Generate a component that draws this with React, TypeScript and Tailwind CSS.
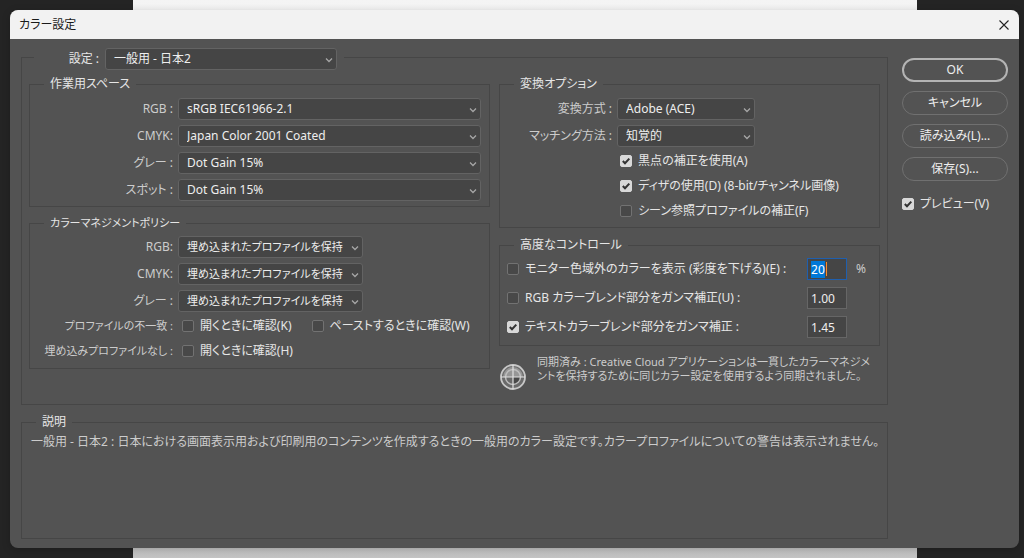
import { FC, ReactNode, useEffect, useRef } from 'react';

interface SelectFieldProps {
    id: string;
    value: string;
    className: string;
}

const SelectField: FC<SelectFieldProps> = ({ id, value, className }) => {
    return (
        <div className={`relative ${className}`}>
            <select
                id={id}
                defaultValue={value}
                className="block w-full h-[22px] appearance-none rounded-[3px] border border-[#636363] bg-[#454545] pl-2 pr-4 text-[#eeeeee] outline-none"
            >
                <option>{value}</option>
            </select>
            <svg className="pointer-events-none absolute right-1 top-2 h-2 w-2" viewBox="0 0 8 8" fill="none" stroke="#a6a6a6" strokeWidth="1.3">
                <path d="M1 2.5 4 5.5 7 2.5" />
            </svg>
        </div>
    );
};

interface LabeledSelectProps extends SelectFieldProps {
    label: string;
    labelClassName: string;
}

const LabeledSelect: FC<LabeledSelectProps> = ({ id, label, value, className, labelClassName }) => {
    return (
        <div className="flex items-center gap-[5px]">
            <label htmlFor={id} className={`shrink-0 text-right text-[#cccccc] ${labelClassName}`}>{label}</label>
            <SelectField id={id} value={value} className={className} />
        </div>
    );
};

interface CheckFieldProps {
    label: string;
    checked?: boolean;
}

const CheckField: FC<CheckFieldProps> = ({ label, checked }) => {
    return (
        <label className="flex items-center gap-[6px] whitespace-nowrap text-[#e6e6e6]">
            <span className="relative h-3 w-3 shrink-0">
                <input
                    type="checkbox"
                    defaultChecked={checked}
                    className="peer block h-3 w-3 appearance-none rounded-[2px] border border-[#727272] bg-[#484848] checked:border-[#d8d8d8] checked:bg-[#d8d8d8]"
                />
                <svg className="pointer-events-none absolute inset-0 hidden h-3 w-3 peer-checked:block" viewBox="0 0 12 12" fill="none" stroke="#333333" strokeWidth="2">
                    <path d="M2.8 6 5 8.3 9.3 3.6" />
                </svg>
            </span>
            {label}
        </label>
    );
};

interface GroupProps {
    title: string;
    titleClassName?: string;
    className?: string;
    children: ReactNode;
}

const Group: FC<GroupProps> = ({ title, titleClassName = '', className = '', children }) => {
    return (
        <fieldset className={`min-w-0 border border-[#464646] ${className}`}>
            <legend className={`ml-[14px] px-[6px] leading-4 text-[#e6e6e6] ${titleClassName}`}>{title}</legend>
            {children}
        </fieldset>
    );
};

const numberClass = 'block h-[22px] w-10 shrink-0 border bg-[#454545] pl-[3px] text-[#eeeeee] outline-none selection:bg-[#0078d7] selection:text-white';

const spaces = [
    { id: 'ws-rgb', label: 'RGB :', value: 'sRGB IEC61966-2.1' },
    { id: 'ws-cmyk', label: 'CMYK:', value: 'Japan Color 2001 Coated' },
    { id: 'ws-gray', label: 'グレー :', value: 'Dot Gain 15%' },
    { id: 'ws-spot', label: 'スポット :', value: 'Dot Gain 15%' },
];

const policies = [
    { id: 'po-rgb', label: 'RGB:' },
    { id: 'po-cmyk', label: 'CMYK:' },
    { id: 'po-gray', label: 'グレー :' },
];

const App: FC = () => {
    const saturation = useRef<HTMLInputElement>(null);

    useEffect(() => {
        saturation.current?.focus();
        saturation.current?.select();
    }, []);

    return (
        <div className="relative flex min-h-screen bg-[#242424] py-[10px] pl-[10px] pr-[5px] font-['Noto_Sans','Noto_Sans_CJK_JP',sans-serif] text-[12px] leading-4 [font-feature-settings:'palt']">
            <div className="absolute inset-y-0 left-[13%] right-[107px] bg-linear-to-b from-[#f4f4f4] to-[#c4c4c4]" />
            <div className="relative flex flex-1 flex-col overflow-hidden rounded-lg bg-[#535353] shadow-[0_2px_8px_rgba(0,0,0,0.2)]">
                <header className="flex h-[29px] shrink-0 items-center justify-between bg-[#f2f2f2] px-[9px] text-[#1a1a1a]">
                    <h1>カラー設定</h1>
                    <button aria-label="閉じる">
                        <svg className="h-3 w-3" viewBox="0 0 12 12" fill="none" stroke="#222222" strokeWidth="1.1">
                            <path d="M1.5 1.5 10.5 10.5M10.5 1.5 1.5 10.5" />
                        </svg>
                    </button>
                </header>

                <div className="flex flex-1 gap-[14px] px-[11px] pb-[9px] pt-[5px]">
                    <main className="flex min-w-0 flex-1 flex-col gap-[9px]">
                        <fieldset className="min-w-0 border border-[#464646] px-[7px] pb-[13px]">
                            <legend className="ml-[5px] flex items-center gap-[6px] pr-[7px] pt-1">
                                <label htmlFor="settings" className="w-[65px] text-right text-[#e6e6e6]">設定 :</label>
                                <SelectField id="settings" value="一般用 - 日本2" className="w-[232px]" />
                            </legend>
                            <div className="grid grid-cols-[23fr_19fr] gap-[9px] pt-[6px]">
                                <div className="flex flex-col gap-2">
                                    <Group title="作業用スペース" className="pb-[5px] pt-[6px]">
                                        <div className="flex flex-col gap-[5px] pr-2">
                                            {spaces.map((s) => (
                                                <LabeledSelect key={s.id} {...s} labelClassName="w-[143px]" className="flex-1" />
                                            ))}
                                        </div>
                                    </Group>
                                    <Group title="カラーマネジメントポリシー" titleClassName="text-[11px]" className="pb-[9px] pt-[5px] text-[11px]">
                                        <div className="flex flex-col gap-[5px]">
                                            {policies.map((p) => (
                                                <LabeledSelect key={p.id} {...p} value="埋め込まれたプロファイルを保持" labelClassName="w-[143px] text-[12px]" className="w-[185px]" />
                                            ))}
                                        </div>
                                        <div className="mt-[6px] flex items-center gap-[9px]">
                                            <span className="w-[143px] text-right text-[#cccccc]">プロファイルの不一致 :</span>
                                            <div className="flex gap-5 text-[12px]">
                                                <CheckField label="開くときに確認(K)" />
                                                <CheckField label="ペーストするときに確認(W)" />
                                            </div>
                                        </div>
                                        <div className="mt-[9px] flex items-center gap-[9px]">
                                            <span className="w-[143px] text-right text-[#cccccc]">埋め込みプロファイルなし :</span>
                                            <div className="text-[12px]">
                                                <CheckField label="開くときに確認(H)" />
                                            </div>
                                        </div>
                                    </Group>
                                </div>

                                <div className="flex flex-col gap-[9px]">
                                    <Group title="変換オプション" className="pb-2 pt-[6px]">
                                        <div className="flex flex-col gap-[5px]">
                                            <LabeledSelect id="engine" label="変換方式 :" value="Adobe (ACE)" labelClassName="w-[112px]" className="w-[138px]" />
                                            <LabeledSelect id="intent" label="マッチング方法 :" value="知覚的" labelClassName="w-[112px]" className="w-[138px]" />
                                        </div>
                                        <div className="ml-[120px] mt-[6px] flex flex-col gap-[9px]">
                                            <CheckField label="黒点の補正を使用(A)" checked />
                                            <CheckField label="ディザの使用(D) (8-bit/チャンネル画像)" checked />
                                            <CheckField label="シーン参照プロファイルの補正(F)" />
                                        </div>
                                    </Group>
                                    <Group title="高度なコントロール" className="pb-[7px] pt-[5px]">
                                        <div className="flex flex-col gap-[7px] px-[7px]">
                                            <div className="flex items-center">
                                                <div className="w-[300px]">
                                                    <CheckField label="モニター色域外のカラーを表示 (彩度を下げる)(E) :" />
                                                </div>
                                                <div className="relative">
                                                    <input ref={saturation} aria-label="彩度" defaultValue="20" className={`${numberClass} border-[#1f5fae]`} />
                                                    <span className="absolute left-[19px] top-1 h-[14px] w-px bg-[#ff8a28]" />
                                                </div>
                                                <span className="ml-[9px] text-[#cccccc]">%</span>
                                            </div>
                                            <div className="flex items-center">
                                                <div className="w-[300px]">
                                                    <CheckField label="RGB カラーブレンド部分をガンマ補正(U) :" />
                                                </div>
                                                <input aria-label="RGB ガンマ" defaultValue="1.00" className={`${numberClass} border-[#666666]`} />
                                            </div>
                                            <div className="flex items-center">
                                                <div className="w-[300px]">
                                                    <CheckField label="テキストカラーブレンド部分をガンマ補正 :" checked />
                                                </div>
                                                <input aria-label="テキスト ガンマ" defaultValue="1.45" className={`${numberClass} border-[#666666]`} />
                                            </div>
                                        </div>
                                    </Group>
                                    <div className="flex gap-[10px]">
                                        <svg className="mt-2 h-7 w-7 shrink-0" viewBox="0 0 28 28" fill="none">
                                            <circle cx="14" cy="14" r="12" fill="#6a6a6a" stroke="#c8c8c8" strokeWidth="1.8" />
                                            <path d="M4 14a10 10 0 0 1 20 0z" fill="#969696" />
                                            <path d="M14 14h8a8 8 0 0 1-8 8z" fill="#484848" />
                                            <circle cx="14" cy="14" r="7.5" stroke="#bdbdbd" strokeWidth="1.5" />
                                            <path d="M14 2v24M2 14h24" stroke="#e0e0e0" strokeWidth="1.2" />
                                        </svg>
                                        <p className="whitespace-nowrap text-[11px] leading-[14px] text-[#cccccc]">
                                            同期済み : Creative Cloud アプリケーションは一貫したカラーマネジメ
                                            <br />
                                            ントを保持するために同じカラー設定を使用するよう同期されました。
                                        </p>
                                    </div>
                                </div>
                            </div>
                        </fieldset>

                        <Group title="説明" className="flex-1 pt-1">
                            <p className="pl-[9px] text-[#cccccc]">
                                一般用 - 日本2 : 日本における画面表示用および印刷用のコンテンツを作成するときの一般用のカラー設定です。カラープロファイルについての警告は表示されません。
                            </p>
                        </Group>
                    </main>

                    <aside className="flex w-[106px] shrink-0 flex-col gap-[9px] pt-[14px] text-[#eeeeee]">
                        <button className="h-6 rounded-full border-2 border-[#b4b4b4]">OK</button>
                        <button className="h-6 rounded-full border border-[#707070]">キャンセル</button>
                        <button className="h-6 rounded-full border border-[#707070]">読み込み(L)...</button>
                        <button className="h-6 rounded-full border border-[#707070]">保存(S)...</button>
                        <div className="mt-[6px]">
                            <CheckField label="プレビュー(V)" checked />
                        </div>
                    </aside>
                </div>
            </div>
        </div>
    );
};

export default App;
